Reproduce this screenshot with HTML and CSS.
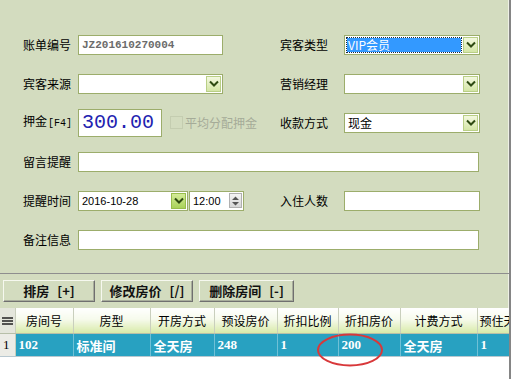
FILE: index.html
```html
<!DOCTYPE html>
<html lang="zh-CN">
<head>
    <meta charset="UTF-8">
    <title>开房登记</title>
    <link rel="stylesheet" href="styles.css">
</head>
<body>
    <div class="window">
        <div class="form">
            <label class="lbl">账单编号</label>
            <div class="field input"><span class="bill-no">JZ201610270004</span></div>
            <label class="lbl lbl-r">宾客类型</label>
            <div class="field select">
                <span class="picked">VIP会员</span>
                <span class="drop"><svg width="10" height="7" viewBox="0 0 10 7"><path d="M1 1.5 L5 5.5 L9 1.5" fill="none" stroke="#2e4a12" stroke-width="2"/></svg></span>
            </div>

            <label class="lbl">宾客来源</label>
            <div class="field select">
                <span class="val"></span>
                <span class="drop"><svg width="10" height="7" viewBox="0 0 10 7"><path d="M1 1.5 L5 5.5 L9 1.5" fill="none" stroke="#2e4a12" stroke-width="2"/></svg></span>
            </div>
            <label class="lbl lbl-r">营销经理</label>
            <div class="field select">
                <span class="val"></span>
                <span class="drop"><svg width="10" height="7" viewBox="0 0 10 7"><path d="M1 1.5 L5 5.5 L9 1.5" fill="none" stroke="#2e4a12" stroke-width="2"/></svg></span>
            </div>

            <label class="lbl">押金<span class="key">[F4]</span></label>
            <div class="span2 deposit-row">
                <div class="input deposit">300.00</div>
                <span class="check"></span>
                <span class="muted">平均分配押金</span>
            </div>
            <label class="lbl lbl-r">收款方式</label>
            <div class="field select">
                <span class="val">现金</span>
                <span class="drop"><svg width="10" height="7" viewBox="0 0 10 7"><path d="M1 1.5 L5 5.5 L9 1.5" fill="none" stroke="#2e4a12" stroke-width="2"/></svg></span>
            </div>

            <label class="lbl">留言提醒</label>
            <div class="wide input"></div>

            <label class="lbl">提醒时间</label>
            <div class="span2 time-row">
                <div class="select date">
                    <span class="val small">2016-10-28</span>
                    <span class="drop drop-hot"><svg width="10" height="7" viewBox="0 0 10 7"><path d="M1 1.5 L5 5.5 L9 1.5" fill="none" stroke="#2e4a12" stroke-width="2"/></svg></span>
                </div>
                <div class="input clock">
                    <span class="small">12:00</span>
                    <span class="spin"><svg width="11" height="12" viewBox="0 0 11 12"><path d="M2 5 L5.5 1.5 L9 5 Z M2 7 L5.5 10.5 L9 7 Z" fill="#555"/></svg></span>
                </div>
            </div>
            <label class="lbl lbl-r">入住人数</label>
            <div class="field input"></div>

            <label class="lbl">备注信息</label>
            <div class="wide input"></div>
        </div>

        <div class="toolbar">
            <button class="btn">排房 [+]</button>
            <button class="btn">修改房价 [/]</button>
            <button class="btn btn-wide">删除房间 [-]</button>
        </div>

        <div class="grid">
            <table>
                <colgroup>
                    <col style="width:15px"><col style="width:58px"><col style="width:77px"><col style="width:64px">
                    <col style="width:63px"><col style="width:61px"><col style="width:62px"><col style="width:77px"><col style="width:60px">
                </colgroup>
                <thead>
                    <tr>
                        <th class="ind"><svg width="11" height="9" viewBox="0 0 11 9"><path d="M0 1h11M0 4h11M0 7h11" stroke="#222" stroke-width="1.4"/></svg></th>
                        <th>房间号</th><th>房型</th><th>开房方式</th><th>预设房价</th>
                        <th>折扣比例</th><th>折扣房价</th><th>计费方式</th><th class="cut">预住天数</th>
                    </tr>
                </thead>
                <tbody>
                    <tr>
                        <td class="ind">1</td>
                        <td>102</td><td>标准间</td><td>全天房</td><td>248</td>
                        <td>1</td><td>200</td><td>全天房</td><td>1</td>
                    </tr>
                </tbody>
            </table>
            <svg class="mark" width="70" height="38" viewBox="0 0 70 38">
                <ellipse cx="35" cy="19" rx="32" ry="15.5" fill="none" stroke="#d8383a" stroke-width="2"/>
            </svg>
        </div>
    </div>
</body>
</html>
```

FILE: styles.css
```css
body {
    margin: 0;
    background: #ffffff;
    font-family: "Noto Sans CJK SC", "Noto Sans", sans-serif;
    font-size: 12px;
    color: #000;
}
.window {
    width: 511px;
    height: 379px;
    box-sizing: border-box;
    border-right: 2px solid #858585;
    box-shadow: inset -1px 0 0 #eef0e6;
    background: #d3dcbf;
    display: flex;
    flex-direction: column;
    overflow: hidden;
}
.form {
    display: grid;
    grid-template-columns: 55px 145px 57px 64px 136px;
    grid-auto-rows: 39px;
    align-items: center;
    padding: 25px 0 0 23px;
    margin-bottom: 14px;
}
.lbl {
    font-size: 12px;
    line-height: 16px;
    white-space: nowrap;
}
.lbl-r {
    grid-column: 4;
}
.key {
    font-family: "Liberation Mono", monospace;
    font-size: 10px;
    margin-left: 1px;
}
.input, .select {
    box-sizing: border-box;
    height: 20px;
    background: #fff;
    border: 1px solid #9cad6b;
    display: flex;
    align-items: center;
}
.field {
    grid-column: span 1;
}
.wide {
    grid-column: 2 / 6;
    margin-right: 1px;
}
.span2 {
    grid-column: 2 / 4;
    display: flex;
    align-items: center;
}
.bill-no {
    font-family: "Liberation Mono", monospace;
    font-weight: bold;
    font-size: 11px;
    color: #6b6b6b;
    padding-left: 3px;
}
.select {
    justify-content: space-between;
    padding: 0 1px 0 2px;
}
.val {
    padding-left: 1px;
    font-size: 12px;
}
.small {
    font-family: "Liberation Sans", sans-serif;
    font-size: 11px;
}
.picked {
    flex: 1;
    height: 14px;
    line-height: 14px;
    margin-right: 2px;
    background: #3399ff;
    color: #fff;
    outline: 1px dotted #1c2a3a;
    font-size: 12px;
    padding-left: 1px;
}
.drop {
    width: 15px;
    height: 16px;
    box-sizing: border-box;
    border: 1px solid #b9cf86;
    background: linear-gradient(#f3f8df, #d4e6a6);
    display: flex;
    align-items: center;
    justify-content: center;
}
.drop-hot {
    border-color: #98bd4c;
    background: linear-gradient(#d4eb98, #a9d25a);
}
.deposit-row {
    height: 28px;
}
.deposit {
    width: 84px;
    height: 28px;
    font-family: "Liberation Mono", monospace;
    font-size: 20px;
    color: #2222b0;
    padding-left: 3px;
}
.check {
    width: 11px;
    height: 11px;
    border: 1px solid #c4cdb0;
    margin: 0 2px 0 8px;
}
.muted {
    color: #a5ab98;
    white-space: nowrap;
}
.time-row {
    height: 20px;
}
.date {
    width: 110px;
}
.clock {
    width: 55px;
    margin-left: 1px;
    justify-content: space-between;
    padding: 0 1px 0 3px;
}
.spin {
    width: 13px;
    height: 15px;
    box-sizing: border-box;
    border: 1px solid #b0b0b0;
    background: linear-gradient(#f4f4f4, #d6d6d6);
    display: flex;
    align-items: center;
    justify-content: center;
}
.toolbar {
    border-top: 1px solid #8e8e8e;
    padding: 6px 3px;
    display: flex;
    gap: 6px;
}
.btn {
    width: 92px;
    height: 22px;
    padding: 0;
    background: #d3dcbf;
    border: 1px solid;
    border-color: #f6f8ef #6f6f6f #6f6f6f #f6f8ef;
    box-shadow: inset -1px -1px 0 #a8ad9c;
    font-family: "Noto Sans CJK SC", sans-serif;
    font-weight: bold;
    font-size: 13px;
    line-height: 16px;
    word-spacing: 5px;
    color: #111;
}
.btn-wide {
    width: 95px;
}
.grid {
    flex: 1;
    position: relative;
    background: #fff;
}
table {
    border-collapse: collapse;
    table-layout: fixed;
    width: 537px;
}
th {
    height: 25px;
    padding: 0;
    font-weight: normal;
    font-size: 12px;
    background: linear-gradient(#ffffff 0%, #f6faec 45%, #d8eaa8 100%);
    border-right: 1px solid #c9cfbd;
    border-bottom: 1px solid #b7bfa8;
    white-space: nowrap;
    overflow: hidden;
}
th.cut {
    text-align: left;
    padding-left: 2px;
}
th.ind {
    background: #e4e6dc;
}
td {
    height: 22px;
    padding: 0 0 0 3px;
    background: #28a1c1;
    color: #fff;
    font-family: "Liberation Serif", "Noto Sans CJK SC", serif;
    font-weight: bold;
    font-size: 13px;
    border-right: 1px solid #6fc0d6;
    border-bottom: 1px solid #b8c8d0;
    white-space: nowrap;
}
td.ind {
    background: #ecece6;
    color: #000;
    font-weight: normal;
    padding-left: 3px;
    border-right: 1px solid #c9cfbd;
}
.mark {
    position: absolute;
    left: 315px;
    top: 23px;
}
```
